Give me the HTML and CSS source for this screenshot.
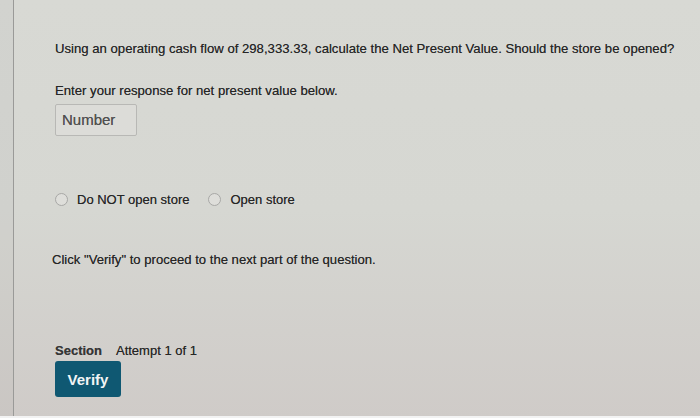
FILE: index.html
```html
<!DOCTYPE html>
<html>
<head>
<meta charset="utf-8">
<link rel="stylesheet" href="styles.css">
</head>
<body>
<div class="screen">
  <div class="edge"></div>
  <div class="content">
    <p class="question">Using an operating cash flow of 298,333.33, calculate the Net Present Value. Should the store be opened?</p>
    <p class="prompt">Enter your response for net present value below.</p>
    <div class="input">Number</div>
    <div class="radios">
      <label class="radio"><span class="circle"></span>Do NOT open store</label>
      <label class="radio"><span class="circle"></span>Open store</label>
    </div>
    <p class="hint">Click "Verify" to proceed to the next part of the question.</p>
    <div class="meta"><span class="section">Section</span><span class="attempt">Attempt 1 of 1</span></div>
    <div class="verify">Verify</div>
  </div>
</div>
<div class="bottom"></div>
</body>
</html>
```
FILE: styles.css
```css
html, body {
  margin: 0;
  padding: 0;
  width: 700px;
  height: 418px;
  overflow: hidden;
}
body {
  font-family: "Liberation Sans", Arial, sans-serif;
  color: #262626;
  background: linear-gradient(180deg, #d8d9d4 0%, #d6d7d2 50%, #cfcbc8 100%);
}
.screen {
  display: flex;
  height: 416px;
}
.edge {
  width: 13px;
  flex: none;
  border-right: 1px solid #9a9a98;
  background: rgba(0,0,0,0.025);
}
.content {
  padding-left: 41px;
  padding-top: 41px;
  display: flex;
  flex-direction: column;
  align-items: flex-start;
  text-shadow: 0 0 0.4px rgba(30,30,30,0.6);
}
p { margin: 0; }
.question {
  font-size: 13.15px;
  line-height: 16px;
}
.prompt {
  margin-top: 26px;
  font-size: 13.15px;
  line-height: 16px;
}
.input {
  margin-top: 5px;
  width: 82px;
  height: 32px;
  box-sizing: border-box;
  border: 1px solid #b8b8b5;
  border-radius: 2px;
  background: #dcdcd8;
  font-size: 15px;
  color: #505050;
  padding-left: 6px;
  line-height: 30px;
}
.radios {
  margin-top: 56px;
  display: flex;
  gap: 19px;
  font-size: 13px;
}
.radio {
  display: flex;
  align-items: center;
  gap: 9px;
}
.circle {
  width: 13px;
  height: 13px;
  border: 1px solid #a8a8a6;
  border-radius: 50%;
  background: #dededa;
  box-sizing: border-box;
}
.hint {
  margin-top: 45px;
  margin-left: -3px;
  font-size: 13.1px;
  line-height: 16px;
}
.meta {
  margin-top: 75px;
  font-size: 13px;
  display: flex;
  gap: 14px;
}
.section {
  font-weight: bold;
  color: #363636;
}
.verify {
  margin-top: 3px;
  width: 66px;
  height: 36px;
  background: #0f5872;
  border-radius: 3px;
  color: #f2f4f5;
  font-weight: bold;
  font-size: 15px;
  display: flex;
  align-items: center;
  justify-content: center;
  text-shadow: none;
}
.bottom {
  height: 2px;
  background: #f2f2f2;
}
```
